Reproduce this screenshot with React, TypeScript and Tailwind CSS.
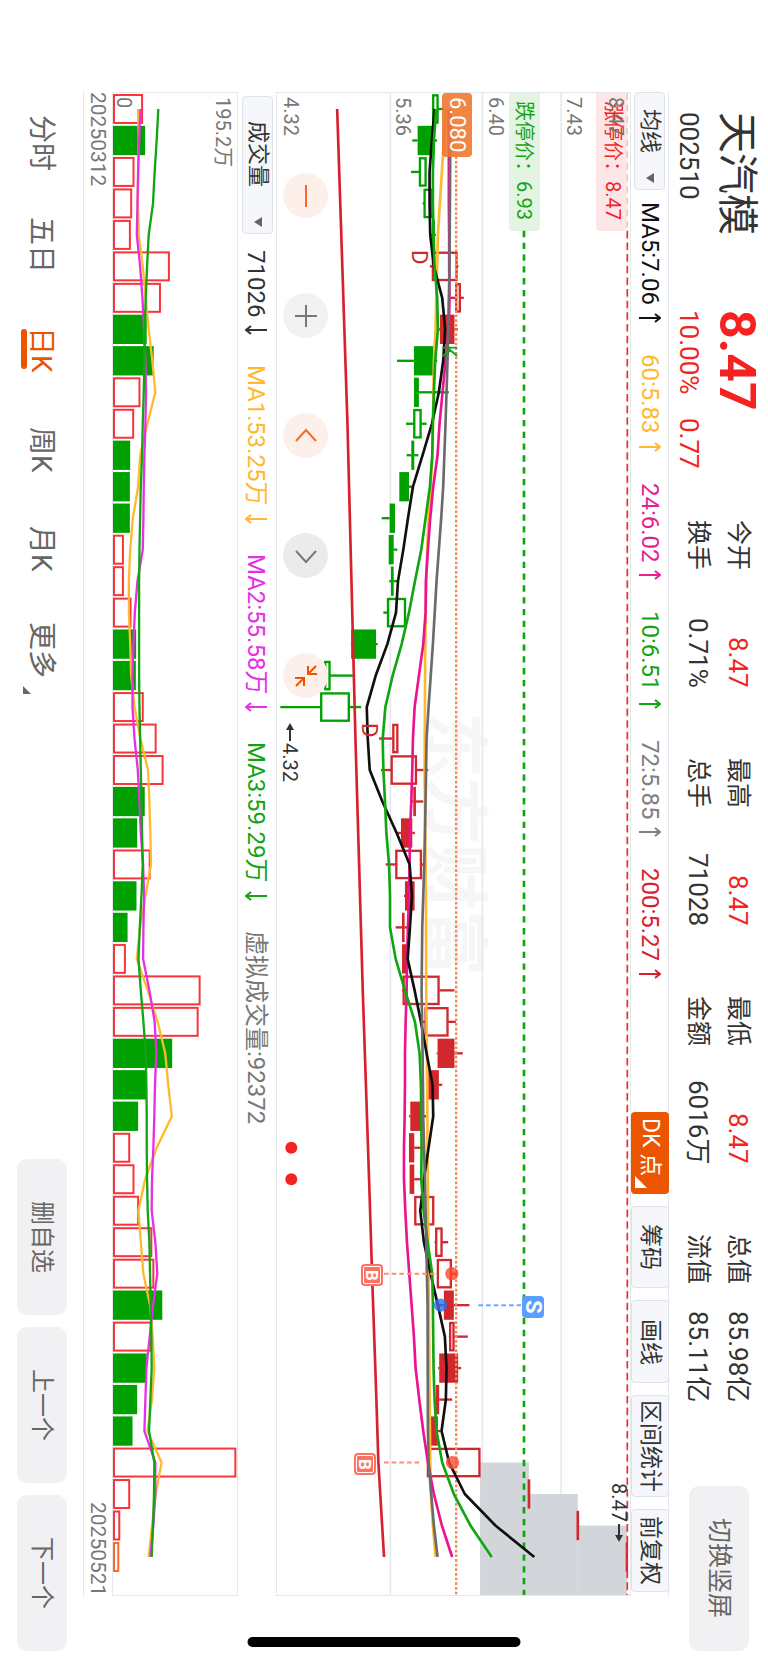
import React from "react";

// chart units: three per pixel, one column every STEP units along the time axis
const STEP = 94.56;
const FIRST = 48;
const LENGTH = 4512;
const at = (i: number) => FIRST + STEP * i;

const GREEN = "#00a000";
const RED = "#d0282c";

// kind: G/R filled, g/r hollow. low, body start, body end, high
type Candle = [string, number, number, number, number];

const candles: Candle[] = [
  ["g", 484, 486, 503, 520],
  ["G", 425, 441, 492, 500],
  ["g", 421, 446, 467, 467],
  ["g", 456, 460, 485, 485],
  ["G", 480, 484, 493, 496],
  ["r", 478, 485, 560, 564],
  ["r", 541, 555, 570, 580],
  ["R", 500, 508, 552, 562],
  ["G", 379, 430, 488, 500],
  ["G", 430, 430, 445, 535],
  ["g", 406, 429, 452, 468],
  ["G", 408, 422, 431, 443],
  ["G", 386, 386, 415, 428],
  ["G", 333, 357, 373, 373],
  ["G", 354, 354, 369, 380],
  ["G", 356, 361, 369, 380],
  ["g", 338, 350, 405, 405],
  ["G", 240, 241, 316, 321],
  ["g", 160, 161, 178, 247],
  ["g", 28, 149, 236, 271],
  ["r", 325, 366, 382, 382],
  ["r", 331, 361, 438, 473],
  ["R", 420, 428, 436, 458],
  ["R", 382, 391, 425, 433],
  ["r", 345, 375, 453, 463],
  ["R", 400, 403, 432, 432],
  ["R", 375, 394, 402, 412],
  ["R", 394, 394, 408, 408],
  ["r", 394, 397, 506, 552],
  ["r", 455, 463, 533, 556],
  ["R", 498, 501, 552, 577],
  ["R", 467, 473, 505, 515],
  ["R", 415, 419, 456, 468],
  ["R", 415, 415, 431, 455],
  ["R", 417, 417, 431, 450],
  ["r", 432, 432, 490, 490],
  ["r", 492, 495, 515, 533],
  ["r", 499, 500, 543, 560],
  ["R", 500, 520, 550, 597],
  ["r", 535, 537, 551, 592],
  ["R", 503, 506, 563, 572],
  ["R", 494, 496, 506, 545],
  ["R", 478, 479, 502, 510],
  ["r", 470, 470, 629, 629],
  ["R", 772, 772, 780, 780],
  ["R", 919, 919, 927, 927],
  ["R", 1067, 1067, 1074, 1074],
];

const volumes: [string, number][] = [
  ["r", 429], ["g", 435], ["r", 403], ["r", 396], ["r", 392], ["r", 510],
  ["r", 483], ["g", 440], ["g", 461], ["r", 421], ["r", 402], ["g", 390],
  ["g", 389], ["g", 389], ["r", 371], ["r", 371], ["r", 394], ["g", 408],
  ["g", 407], ["r", 431], ["r", 470], ["r", 491], ["g", 434], ["g", 411],
  ["r", 452], ["g", 409], ["g", 382], ["r", 377], ["r", 603], ["r", 597],
  ["g", 517], ["g", 440], ["g", 414], ["r", 390], ["r", 403], ["r", 417],
  ["r", 457], ["r", 463], ["g", 487], ["r", 455], ["g", 440], ["g", 411],
  ["g", 397], ["r", 711], ["r", 390], ["r", 360], ["o", 357],
];

type Line = { color: string; points: [number, number][] };

const series = (values: number[]): [number, number][] =>
  values.map((v, i) => [i, v]);

const priceLines: Line[] = [
  {
    color: "#d9202e",
    points: [
      [0, 199], [10, 230], [20, 254], [28, 276], [34, 295], [37, 304],
      [41, 317], [43, 323], [46, 340],
    ],
  },
  {
    color: "#ffb92e",
    points: [
      [0, 525], [1, 520], [2, 514], [3, 508], [4, 502], [5, 500], [6, 497],
      [7, 495], [8, 490], [10, 487], [11, 486], [12, 480], [13, 474],
      [14, 470], [15, 467], [17, 464], [21, 462], [23, 464], [25, 466],
      [28, 467], [30, 469], [33, 471], [37, 474], [43, 479], [44, 481],
      [45, 487], [46, 495],
    ],
  },
  {
    color: "#ec1391",
    points: series([
      534, 535, 535, 535, 536, 536, 537, 535, 525, 516, 507, 501, 488, 479,
      472, 466, 465, 458, 445, 432, 427, 425, 422, 418, 417, 415, 412, 409,
      408, 405, 403, 403, 402, 400, 400, 404, 409, 416, 423, 430, 435, 446,
      458, 472, 490, 514, 545,
    ]),
  },
  {
    color: "#0f0f0f",
    points: series([
      492, 484, 477, 477, 479, 490, 515, 524, 518, 505, 484, 456, 427, 412,
      398, 382, 376, 350, 315, 288, 291, 297, 335, 378, 417, 424, 418, 411,
      432, 451, 468, 486, 488, 474, 460, 449, 460, 480, 502, 523, 528, 526,
      513, 536, 583, 675, 792,
    ]),
  },
  {
    color: "#12a512",
    points: series([
      497, 490, 487, 487, 489, 492, 500, 502, 494, 490, 487, 485, 478, 465,
      452, 433, 415, 393, 366, 344, 336, 338, 343, 347, 355, 358, 358, 375,
      403, 433, 447, 451, 452, 453, 452, 459, 471, 485, 487, 488, 489, 492,
      498, 515, 550, 600, 664,
    ]),
  },
  {
    color: "#6b6b6b",
    points: [
      [0, 540], [5, 537], [8, 531], [10, 525], [12, 518], [13, 512],
      [15, 498], [17, 487], [19, 474], [20, 468], [22, 465], [24, 461],
      [26, 455], [28, 453], [30, 456], [32, 458], [34, 463], [36, 467],
      [38, 471], [42, 472], [43, 474], [44, 482], [45, 490], [46, 501],
    ],
  },
];

const volumeLines: Line[] = [
  {
    color: "#ffb92e",
    points: series([
      414, 416, 414, 413, 416, 428, 437, 446, 457, 466, 442, 420, 414, 398,
      390, 386, 386, 390, 393, 403, 421, 444, 448, 451, 453, 436, 420, 410,
      443, 473, 496, 505, 516, 470, 435, 415, 422, 430, 450, 458, 463, 456,
      442, 485, 467, 456, 446,
    ]),
  },
  {
    color: "#e62fe6",
    points: series([
      421, 417, 414, 412, 410, 420, 427, 432, 436, 438, 436, 433, 431, 430,
      428, 412, 404, 400, 397, 397, 403, 413, 418, 422, 429, 432, 430, 429,
      448, 464, 469, 465, 463, 460, 456, 455, 466, 472, 459, 449, 439, 436,
      433, 466, 466, 460, 451,
    ]),
  },
  {
    color: "#12a512",
    points: series([
      475, 470, 464, 459, 446, 441, 437, 434, 433, 431, 428, 426, 422, 420,
      418, 417, 417, 417, 417, 418, 420, 422, 424, 426, 428, 424, 419, 415,
      422, 430, 437, 439, 440, 440, 441, 443, 448, 450, 452, 454, 455, 451,
      447, 463, 462, 459, 455,
    ]),
  },
];

const stats = [
  ["今开", "8.47", "换手", "0.71%"],
  ["最高", "8.47", "总手", "71028"],
  ["最低", "8.47", "金额", "6016万"],
  ["总值", "85.98亿", "流值", "85.11亿"],
];

const Lines = ({ lines, width }: { lines: Line[]; width: number }) => (
  <>
    {lines.map((line, n) => (
      <polyline
        key={n}
        points={line.points.map(([i, v]) => `${v},${at(i)}`).join(" ")}
        fill="none"
        stroke={line.color}
        strokeWidth={width}
        strokeLinejoin="round"
      />
    ))}
  </>
);

const PriceSvg = () => (
  <svg
    className="absolute inset-0 h-full w-full"
    viewBox={`18 0 1062 ${LENGTH}`}
    preserveAspectRatio="none"
  >
    {[359, 636, 873].map((x) => (
      <path key={x} d={`M${x} 0V${LENGTH}`} stroke="#e4e9f0" strokeWidth="5" />
    ))}
    <rect x="629" y={at(43)} width="147" height={LENGTH - at(43)} fill="#d2d6db" />
    <rect x="776" y={at(44)} width="147" height={LENGTH - at(44)} fill="#d2d6db" />
    <rect x="923" y={at(45)} width="148" height={LENGTH - at(45)} fill="#d2d6db" />
    <path d={`M1072 0V${LENGTH}`} stroke="#f0b060" strokeWidth="4" strokeDasharray="20 15" opacity="0.7" />
    {candles.map(([kind, low, start, end, high], i) => {
      const color = kind.toLowerCase() === "g" ? GREEN : RED;
      const hollow = kind === "g" || kind === "r";
      return (
        <g key={i} stroke={color} strokeWidth="7">
          {low < start && <path d={`M${low} ${at(i)}H${start}`} />}
          {high > end && <path d={`M${end} ${at(i)}H${high}`} />}
          {hollow ? (
            <rect x={start + 2} y={at(i) - 41} width={end - start - 4} height="82" fill="none" />
          ) : (
            <rect x={start} y={at(i) - 44} width={end - start} height="88" fill={color} stroke="none" />
          )}
        </g>
      );
    })}
    <path d={`M557 190V${LENGTH}`} stroke="#f58a50" strokeWidth="7" strokeDasharray="8 6" />
    <path d={`M761 414V${LENGTH}`} stroke="#0da60d" strokeWidth="8" strokeDasharray="19 16.5" />
    <path d={`M1072 414V${LENGTH}`} stroke="#f02b36" strokeWidth="5" strokeDasharray="22 13" />
    <Lines lines={priceLines} width={8} />
    <g strokeWidth="6" strokeDasharray="14 9">
      <path d={`M340 ${at(37)}H500`} stroke="#ff8a7a" />
      <path d={`M340 ${at(43)}H450`} stroke="#ff8a7a" />
      <path d={`M624 ${at(38)}H752`} stroke="#6aaaff" />
    </g>
    <circle cx="544" cy={at(37)} r="20" fill="#fa4a30" opacity="0.8" />
    <circle cx="546" cy={at(43)} r="20" fill="#fa4a30" opacity="0.8" />
    <circle cx="510" cy={at(38)} r="20" fill="#2b70ee" opacity="0.8" />
    <circle cx="61" cy={at(33)} r="18" fill="#f52222" />
    <circle cx="61" cy={at(34)} r="18" fill="#f52222" />
  </svg>
);

const VolumeSvg = () => (
  <svg
    className="absolute inset-0 h-full w-full"
    viewBox={`338 0 375 ${LENGTH}`}
    preserveAspectRatio="none"
  >
    {volumes.map(([kind, end], i) =>
      kind === "g" ? (
        <rect key={i} x="337" y={at(i) - 44} width={end - 337} height="88" fill={GREEN} />
      ) : (
        <rect
          key={i}
          x="341"
          y={at(i) - 42}
          width={end - 344}
          height="84"
          fill="none"
          stroke={kind === "o" ? "#fb6a2c" : "#f8343a"}
          strokeWidth="6"
        />
      ),
    )}
    <Lines lines={volumeLines} width={7} />
  </svg>
);

const Select = ({ label, className }: { label: string; className: string }) => (
  <div className={"relative w-[31px] rounded border border-[#dfe2e8] bg-[#f6f7fa] " + className}>
    <select
      aria-label={label}
      className="h-full w-full appearance-none bg-transparent pt-4 text-[22px] leading-7 text-[#333]"
    >
      <option>{label}</option>
    </select>
    <svg className="pointer-events-none absolute bottom-1.5 left-[11px] h-2.5 w-2" viewBox="0 0 8 10">
      <path d="M8 0v10L0 5z" fill="#666" />
    </svg>
  </div>
);

const ToolButton = ({ label, className }: { label: string; className: string }) => (
  <button
    className={
      "flex w-[38px] items-center justify-center rounded border border-[#dfe2e8] bg-[#f6f7fa] text-[23px] leading-7 text-[#333] " +
      className
    }
  >
    {label}
  </button>
);

// value with a trend arrow; the page reads top to bottom, so "up" points right
const Trend = ({ text, down, className }: { text: string; down?: boolean; className: string }) => (
  <span className={"flex items-center gap-2 " + className}>
    {text}
    <svg className="h-2.5 w-[22px]" viewBox="0 0 22 10" fill="none" stroke="currentColor" strokeWidth="2">
      <path d={down ? "M22 5H1M6 1 1 5l5 4" : "M0 5h21M16 1l5 4-5 4"} />
    </svg>
  </span>
);

const RoundButton = ({
  label,
  className,
  children,
}: {
  label: string;
  className: string;
  children: React.ReactNode;
}) => (
  <button
    aria-label={label}
    className={"flex h-[45px] w-[45px] items-center justify-center rounded-full " + className}
  >
    <svg className="h-6 w-6" viewBox="0 0 24 24" fill="none" stroke="currentColor" strokeWidth="2">
      {children}
    </svg>
  </button>
);

const BuyMarker = ({ className }: { className: string }) => (
  <span className={"absolute h-[22px] w-[22px] rounded bg-[#ff7262] p-0.5 " + className}>
    <span className="flex h-full w-full items-center justify-center rounded-xs border border-white text-[17px] leading-4 font-bold text-white">
      B
    </span>
  </span>
);

const SellMarker = ({ className }: { className: string }) => (
  <span
    className={
      "absolute flex h-[22px] w-[22px] items-center justify-center rounded bg-[#5a9eff] text-[22px] leading-[22px] font-bold text-white " +
      className
    }
  >
    S
  </span>
);

const Header = () => (
  <header className="flex w-[99px] pt-[112px] pr-[7px] pb-[13px] text-[#333]">
    <div className="flex h-[198px] flex-col gap-2">
      <h1 className="text-[41px] leading-[48px]">天汽模</h1>
      <p className="text-[26px] leading-8">002510</p>
    </div>
    <div className="flex h-[210px] flex-col gap-2 text-[#f52222]">
      <p className="text-[50px] leading-[48px] font-bold">8.47</p>
      <p className="flex gap-6 text-[26px] leading-8">
        <span>10.00%</span>
        <span>0.77</span>
      </p>
    </div>
    <div className="flex gap-[70px] pr-2">
      {stats.map(([topLabel, top, label, value]) => (
        <dl key={label} className="flex h-[168px] flex-col gap-2.5 text-[26px] leading-[30px]">
          <div className="flex justify-between">
            <dt className="text-[25px]">{topLabel}</dt>
            <dd className={topLabel === "总值" ? "" : "text-[#f52222]"}>{top}</dd>
          </div>
          <div className="flex justify-between">
            <dt className="text-[25px]">{label}</dt>
            <dd>{value}</dd>
          </div>
        </dl>
      ))}
    </div>
    <button className="mt-auto mr-3 flex h-[165px] w-[60px] items-center justify-center rounded-[10px] bg-[#f1f1f4] text-[25px] text-[#666]">
      切换竖屏
    </button>
  </header>
);

const Averages = () => (
  <div className="flex w-[39px] items-center border-r border-l border-[#e4e7ec]">
    <Select label="均线" className="h-[98px]" />
    <div className="flex gap-[31px] pt-3 text-[24px] leading-8 whitespace-nowrap">
      <Trend text="MA5:7.06" className="text-[#111]" />
      <Trend text="60:5.83" className="text-[#ffb92e]" />
      <Trend text="24:6.02" className="text-[#e8208f]" />
      <Trend text="10:6.51" className="text-[#12a512]" />
      <Trend text="72:5.85" className="text-[#808080]" />
      <Trend text="200:5.27" className="text-[#d9202e]" />
    </div>
    <div className="mt-auto mb-1 flex gap-3">
      <button className="relative flex h-[82px] w-[38px] justify-start rounded bg-[#eb5500] pt-1.5 text-[23px] leading-[38px] text-white">
        DK 点
        <svg className="absolute bottom-1.5 left-1 h-3 w-3" viewBox="0 0 12 12">
          <path d="M0 0v12h12z" fill="#fff" />
        </svg>
      </button>
      <ToolButton label="筹码" className="h-[82px]" />
      <ToolButton label="画线" className="h-[83px]" />
      <ToolButton label="区间统计" className="h-[102px]" />
      <ToolButton label="前复权" className="h-[83px]" />
    </div>
  </div>
);

const PriceChart = () => (
  <section className="relative flex flex-1 items-center justify-center border-t border-b border-l border-[#e4e7ec] text-[20px] leading-5 text-[#777]">
    <span className="text-[66px] leading-none font-bold text-[#f6f6f7]">东方财富</span>
    <span className="absolute top-0 right-[3px] h-[138px] w-[31px] rounded-b bg-[#fde6e8]" />
    <span className="absolute top-0 left-[232px] h-[138px] w-[31px] rounded-b bg-[#e3f4e3]" />
    <PriceSvg />
    <span className="absolute top-1 left-1">4.32</span>
    <span className="absolute top-1 left-[116px]">5.36</span>
    <span className="absolute top-1 left-[209px]">6.40</span>
    <span className="absolute top-1 left-[287px]">7.43</span>
    <span className="absolute top-2 left-[326px] text-[#f52222]">涨停价：8.47</span>
    <span className="absolute top-1 left-[329px]">8.47</span>
    <span className="absolute top-2 left-[237px] text-[#12a512]">跌停价：6.93</span>
    <span className="absolute top-0 left-[165px] h-16 w-[30px] rounded bg-[#f07830]/90 pt-1 text-[22px] leading-[30px] text-white">
      6.080
    </span>
    <span className="absolute top-[157px] left-[132px] text-[22px] text-[#d0282c]">D</span>
    <span className="absolute top-[630px] left-[82px] text-[22px] text-[#d0282c]">D</span>
    <span className="absolute top-[252px] left-[162px] text-[#12a512]">K</span>
    <span className="absolute top-[630px] left-[3px] flex items-center gap-0.5 text-[#333]">
      <svg className="h-[18px] w-2" viewBox="0 0 8 18">
        <path d="M4 0 8 7H5v11H3V7H0z" fill="currentColor" />
      </svg>
      4.32
    </span>
    <span className="absolute top-[1390px] left-[332px] flex items-center gap-0.5 text-[#333]">
      8.47
      <svg className="h-[18px] w-2" viewBox="0 0 8 18">
        <path d="M4 18 0 11h3V0h2v11h3z" fill="currentColor" />
      </svg>
    </span>
    <BuyMarker className="top-[1171px] left-[84px]" />
    <BuyMarker className="top-[1360px] left-[77px]" />
    <SellMarker className="top-[1203px] left-[245px]" />
    <div className="absolute top-20 left-1.5 flex gap-[75px]">
      <RoundButton label="缩小" className="bg-[#fdf0ea] text-[#f36c2c]">
        <path d="M12 1v22" />
      </RoundButton>
      <RoundButton label="放大" className="bg-[#f2f2f2] text-[#777]">
        <path d="M12 1v22M1 12h22" />
      </RoundButton>
      <RoundButton label="左移" className="bg-[#fdf0ea] text-[#f36c2c]">
        <path d="M2 17 12 6l10 11" />
      </RoundButton>
      <RoundButton label="右移" className="bg-[#ebebeb] text-[#777]">
        <path d="M2 7l10 11L22 7" />
      </RoundButton>
      <RoundButton label="收起" className="bg-[#fdf0ea] text-[#eb5500]">
        <path d="M22 2 14 10M14 2v8h9M2 22l8-8M10 22v-8H1" />
      </RoundButton>
    </div>
  </section>
);

const VolumeHeader = () => (
  <div className="flex w-[38px] items-center">
    <Select label="成交量" className="mt-1 h-[138px] pt-2" />
    <div className="flex gap-[30px] pt-4 pr-0.5 text-[24px] leading-8 whitespace-nowrap">
      <Trend down text="71026" className="text-[#333]" />
      <Trend down text="MA1:53.25万" className="text-[#ffb92e]" />
      <Trend down text="MA2:55.58万" className="text-[#e62fe6]" />
      <Trend down text="MA3:59.29万" className="text-[#12a512]" />
      <span className="text-[#777]">虚拟成交量:92372</span>
    </div>
  </div>
);

const VolumeChart = () => (
  <section className="relative w-[126px] border border-[#e4e7ec] text-[20px] leading-5 text-[#777]">
    <VolumeSvg />
    <span className="absolute top-1 left-px">0</span>
    <span className="absolute top-1 right-1">195.2万</span>
  </section>
);

const Footer = () => (
  <footer className="flex w-[83px] items-center justify-between pt-[115px] pb-[13px] text-[#666]">
    <nav className="flex gap-[46px] pr-0.5 text-[28px] leading-9">
      <button>分时</button>
      <button>五日</button>
      <button className="relative mt-2 text-[#eb5500]">
        日K
        <span className="absolute bottom-1 -left-0.5 h-10 w-1.5 rounded-full bg-[#eb5500]" />
      </button>
      <button className="mt-2">周K</button>
      <button className="mt-2">月K</button>
      <button className="mt-1 flex gap-2">
        更多
        <svg className="mr-auto h-2 w-2" viewBox="0 0 8 8">
          <path d="M0 0v8h8z" fill="#666" />
        </svg>
      </button>
    </nav>
    <div className="flex gap-3 text-[24px]">
      {["删自选", "上一个", "下一个"].map((label) => (
        <button
          key={label}
          className="flex h-[156px] w-[50px] items-center justify-center rounded-[10px] bg-[#f1f1f4]"
        >
          {label}
        </button>
      ))}
    </div>
  </footer>
);

export default function App() {
  return (
    <main className="relative flex h-screen w-full flex-col overflow-hidden bg-white [font-family:Roboto,'Liberation_Sans','Noto_Sans_CJK_SC',sans-serif] [text-orientation:sideways] [writing-mode:vertical-rl]">
      <Header />
      <div className="flex flex-1 flex-col pt-[92px] pb-[68px]">
        <Averages />
        <PriceChart />
        <VolumeHeader />
        <VolumeChart />
        <div className="flex w-[29px] items-center justify-between border-l border-[#e4e7ec] text-[21px] leading-6 text-[#777]">
          <span>20250312</span>
          <span>20250521</span>
        </div>
      </div>
      <Footer />
      <div className="absolute bottom-[17px] left-1/2 h-2.5 w-[273px] -translate-x-1/2 rounded-full bg-black" />
    </main>
  );
}
